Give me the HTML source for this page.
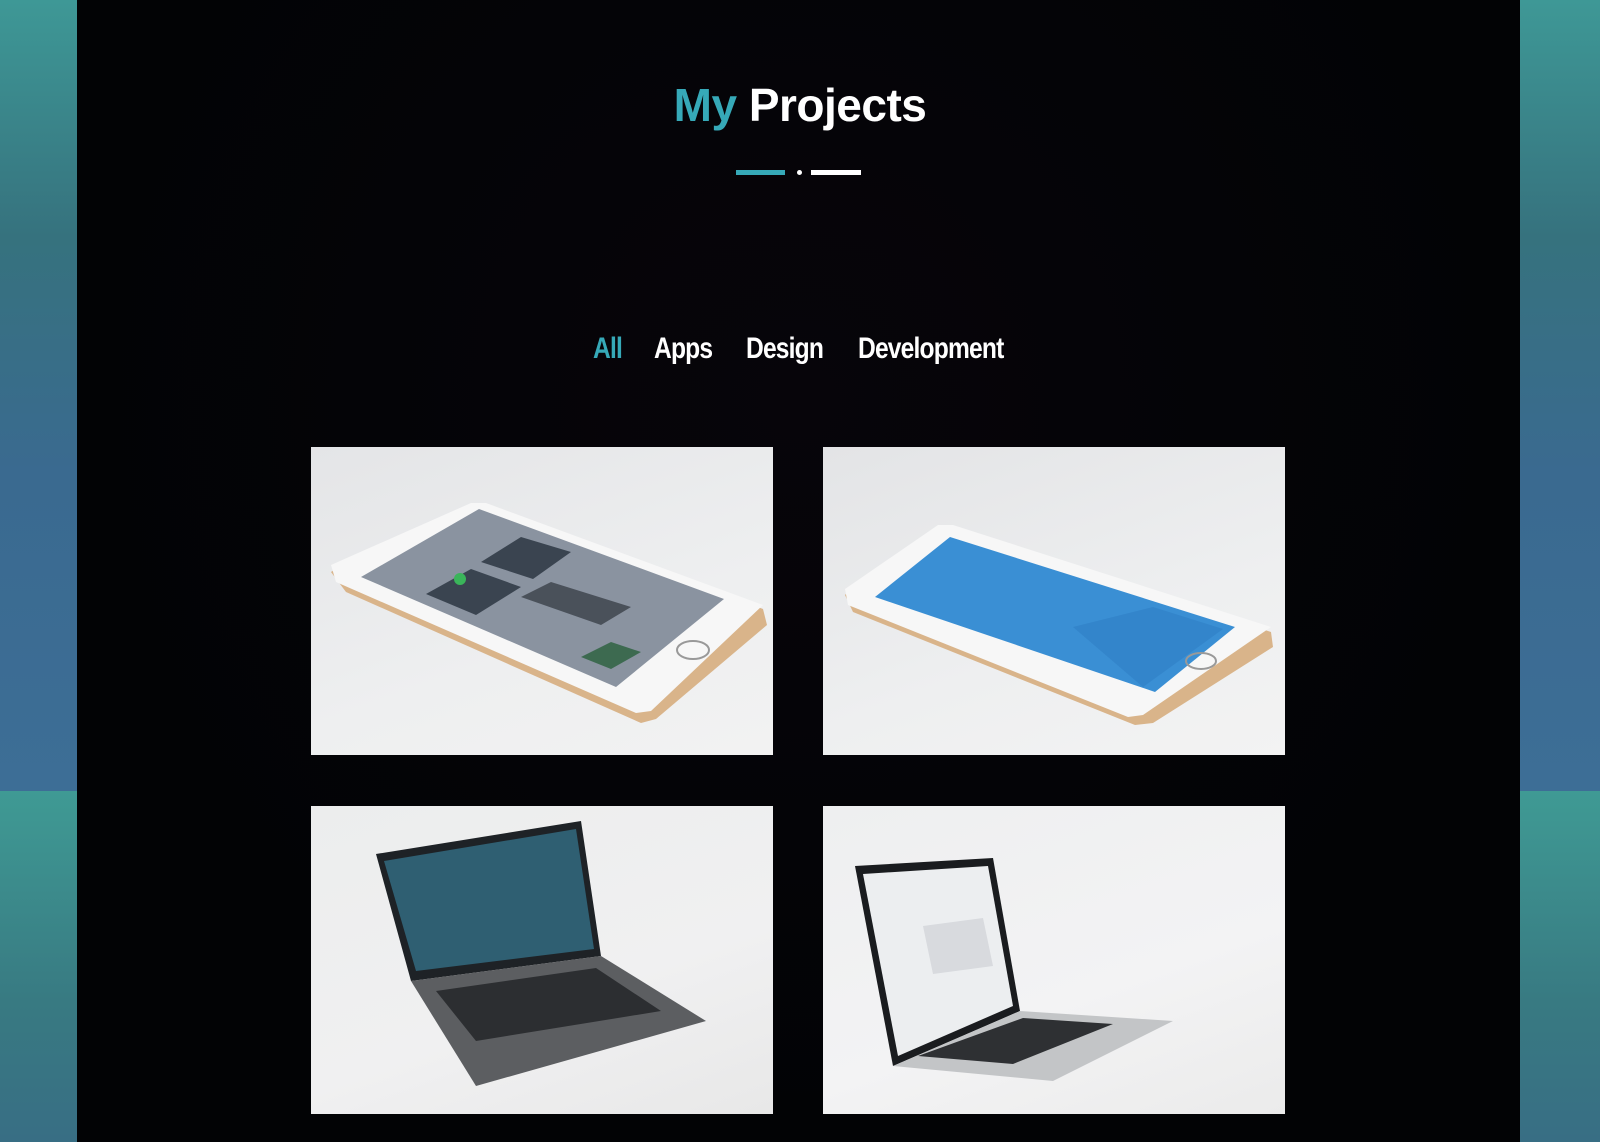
<!DOCTYPE html>
<html><head><meta charset="utf-8"><style>
*{margin:0;padding:0;box-sizing:border-box}
body{width:1600px;height:1142px;overflow:hidden;background:#020406;position:relative;font-family:"Liberation Sans",sans-serif}
.side{position:absolute;width:77px}
.tl{left:0;top:0;height:791px;background:linear-gradient(180deg,#3e9896 0%,#36727e 30%,#3a6a90 60%,#3d6e96 100%)}
.bl{left:0;top:791px;height:351px;background:linear-gradient(180deg,#3f9a94 0%,#387a82 60%,#386e84 100%)}
.tr{left:1520px;width:80px;top:0;height:791px;background:linear-gradient(180deg,#3e9896 0%,#36727e 30%,#3a6a90 60%,#3d6e96 100%)}
.br{left:1520px;width:80px;top:791px;height:351px;background:linear-gradient(180deg,#3f9a94 0%,#387a82 60%,#386e84 100%)}
.main{position:absolute;left:77px;top:0;width:1443px;height:1142px;background:radial-gradient(ellipse at 50% 35%,#07050a 0%,#020305 70%)}
h1{position:absolute;left:0;width:1600px;top:78px;text-align:center;font-size:46px;font-weight:bold;color:#fff;letter-spacing:-0.5px}
h1 span{color:#36a9b8}
.bar{position:absolute;top:170px;height:5px}
.filters{position:absolute;top:332px;font-weight:bold;font-size:30px;color:#fff;letter-spacing:-1px;transform:scaleX(0.82);transform-origin:0 0;white-space:nowrap}
.card{position:absolute;width:462px;height:308px;overflow:hidden}
</style></head><body>
<div class="side tl"></div><div class="side bl"></div><div class="side tr"></div><div class="side br"></div>
<div class="main"></div>
<h1><span>My</span> Projects</h1>
<div class="bar" style="left:736px;width:49px;background:#36a9b8"></div>
<div class="bar" style="left:797px;width:5px;border-radius:50%;background:#fff"></div>
<div class="bar" style="left:811px;width:50px;background:#fff"></div>
<div class="filters" style="left:593px;color:#36a9b8">All</div>
<div class="filters" style="left:654px">Apps</div>
<div class="filters" style="left:746px">Design</div>
<div class="filters" style="left:858px">Development</div>

<div class="card" style="left:311px;top:447px;background:linear-gradient(160deg,#e4e5e7,#eeeff0 60%,#f2f2f2)">
<svg width="462" height="308" viewBox="0 0 462 308">
<polygon points="20,125 30,118 160,58 175,58 452,162 456,178 345,272 330,276 35,145" fill="#d9b48a"/>
<polygon points="20,118 160,56 175,56 452,158 340,264 325,266 25,135" fill="#f7f7f7"/>
<polygon points="50,130 168,62 413,152 305,240" fill="#8a93a0"/>
<polygon points="115,147 160,122 210,140 165,168" fill="#3a4450"/>
<polygon points="170,115 210,90 260,105 222,132" fill="#3a4450"/>
<circle cx="149" cy="132" r="6" fill="#3ab55a"/>
<polygon points="210,150 240,135 320,160 290,178" fill="#4a515a"/>
<polygon points="270,210 300,195 330,205 300,222" fill="#3d6a50"/>
<ellipse cx="382" cy="203" rx="16" ry="9" fill="none" stroke="#999" stroke-width="2"/>
</svg></div>

<div class="card" style="left:823px;top:447px;background:linear-gradient(160deg,#e3e4e6,#eeeff0 60%,#f3f3f3)">
<svg width="462" height="308" viewBox="0 0 462 308">
<polygon points="22,148 30,140 115,82 130,80 448,185 450,200 330,276 312,278 30,165" fill="#d9b48a"/>
<polygon points="22,142 115,78 130,78 448,180 320,268 305,270 25,158" fill="#f7f7f7"/>
<polygon points="52,150 127,90 412,180 332,245" fill="#3a8fd4"/>
<polygon points="250,180 330,160 400,182 320,240" fill="#2e7ec4" opacity="0.6"/>
<ellipse cx="378" cy="214" rx="15" ry="8" fill="none" stroke="#999" stroke-width="2"/>
</svg></div>

<div class="card" style="left:311px;top:806px;background:linear-gradient(160deg,#eceded,#f0f0f1 60%,#e8e8e8)">
<svg width="462" height="308" viewBox="0 0 462 308">
<polygon points="65,48 270,15 290,150 100,175" fill="#1e2226"/>
<polygon points="73,55 265,23 283,143 105,165" fill="#2f5f72"/>
<polygon points="100,175 290,150 395,215 165,280" fill="#5c5e61"/>
<polygon points="125,185 285,162 350,205 165,235" fill="#2c2e31"/>
</svg></div>

<div class="card" style="left:823px;top:806px;background:linear-gradient(160deg,#eeeff0,#f3f3f4 60%,#ebebeb)">
<svg width="462" height="308" viewBox="0 0 462 308">
<polygon points="32,60 170,52 197,205 70,260" fill="#1a1c1f"/>
<polygon points="40,68 165,60 190,200 75,250" fill="#eceef0"/>
<polygon points="100,120 160,112 170,160 110,168" fill="#d8dade"/>
<polygon points="70,260 197,205 350,215 230,275" fill="#c3c5c7"/>
<polygon points="95,250 200,212 290,218 190,258" fill="#2e3033"/>
</svg></div>
</body></html>
